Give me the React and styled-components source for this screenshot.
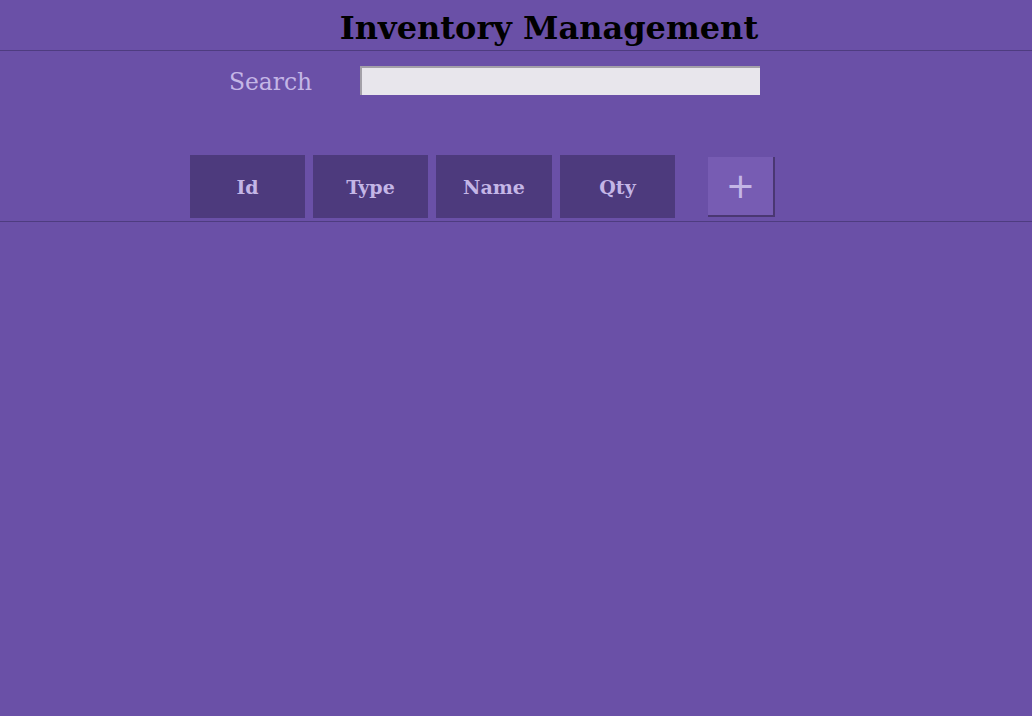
import React from "react";
import styled, { createGlobalStyle } from "styled-components";

const Global = createGlobalStyle`
  html, body { margin: 0; padding: 0; background: #6a50a7; }
  body { font-family: "DejaVu Serif", serif; min-height: 716px; }
`;

const Page = styled.div`
  min-height: 716px;
  background: #6a50a7;
`;

const Header = styled.header`
  height: 50px;
  border-bottom: 1px solid #4e3c80;
  display: flex;
  justify-content: center;
  padding-left: 66px;
  overflow: hidden;
`;

const Title = styled.h1`
  margin: 0;
  font-size: 32px;
  line-height: 56px;
  height: 50px;
  font-weight: bold;
  color: #000;
`;

const SearchRow = styled.div`
  display: flex;
  align-items: flex-start;
  padding: 14px 0 0 229px;
  height: 30px;
`;

const Label = styled.label`
  font-size: 23.4px;
  color: #c4b6e6;
  width: 131px;
  line-height: 30px;
  margin-top: 2px;
`;

const SearchInput = styled.input`
  width: 400px;
  height: 29px;
  box-sizing: border-box;
  background: #e8e6ec;
  border: none;
  border-top: 2px solid #a3a0a8;
  border-left: 2px solid #a3a0a8;
  outline: none;
  padding: 0 4px;
  margin-top: 1px;
`;

const TableHead = styled.div`
  display: flex;
  align-items: flex-start;
  padding: 60px 0 3px 190px;
  border-bottom: 1px solid #4e3c80;
`;

const HeadCell = styled.div`
  width: ${(p) => p.w || 115}px;
  height: 63px;
  margin-right: 8px;
  background: #4d3a7d;
  color: #c4b6e6;
  font-weight: bold;
  font-size: 19px;
  display: flex;
  align-items: center;
  justify-content: center;
`;

const AddButton = styled.button`
  margin: 2px 0 0 25px;
  width: 67px;
  height: 60px;
  box-sizing: border-box;
  background: #775cb3;
  border: none;
  border-right: 2px solid #4a3772;
  border-bottom: 2px solid #4a3772;
  color: #c4b6e6;
  font-family: "DejaVu Sans", sans-serif;
  font-size: 35px;
  font-weight: normal;
  line-height: 1;
  padding: 0;
  display: flex;
  align-items: center;
  justify-content: center;
`;

export default function App() {
  return (
    <Page>
      <Global />
      <Header>
        <Title>Inventory Management</Title>
      </Header>
      <SearchRow>
        <Label>Search</Label>
        <SearchInput />
      </SearchRow>
      <TableHead>
        <HeadCell w={115}>Id</HeadCell>
        <HeadCell w={115}>Type</HeadCell>
        <HeadCell w={116}>Name</HeadCell>
        <HeadCell w={115}>Qty</HeadCell>
        <AddButton>+</AddButton>
      </TableHead>
    </Page>
  );
}
